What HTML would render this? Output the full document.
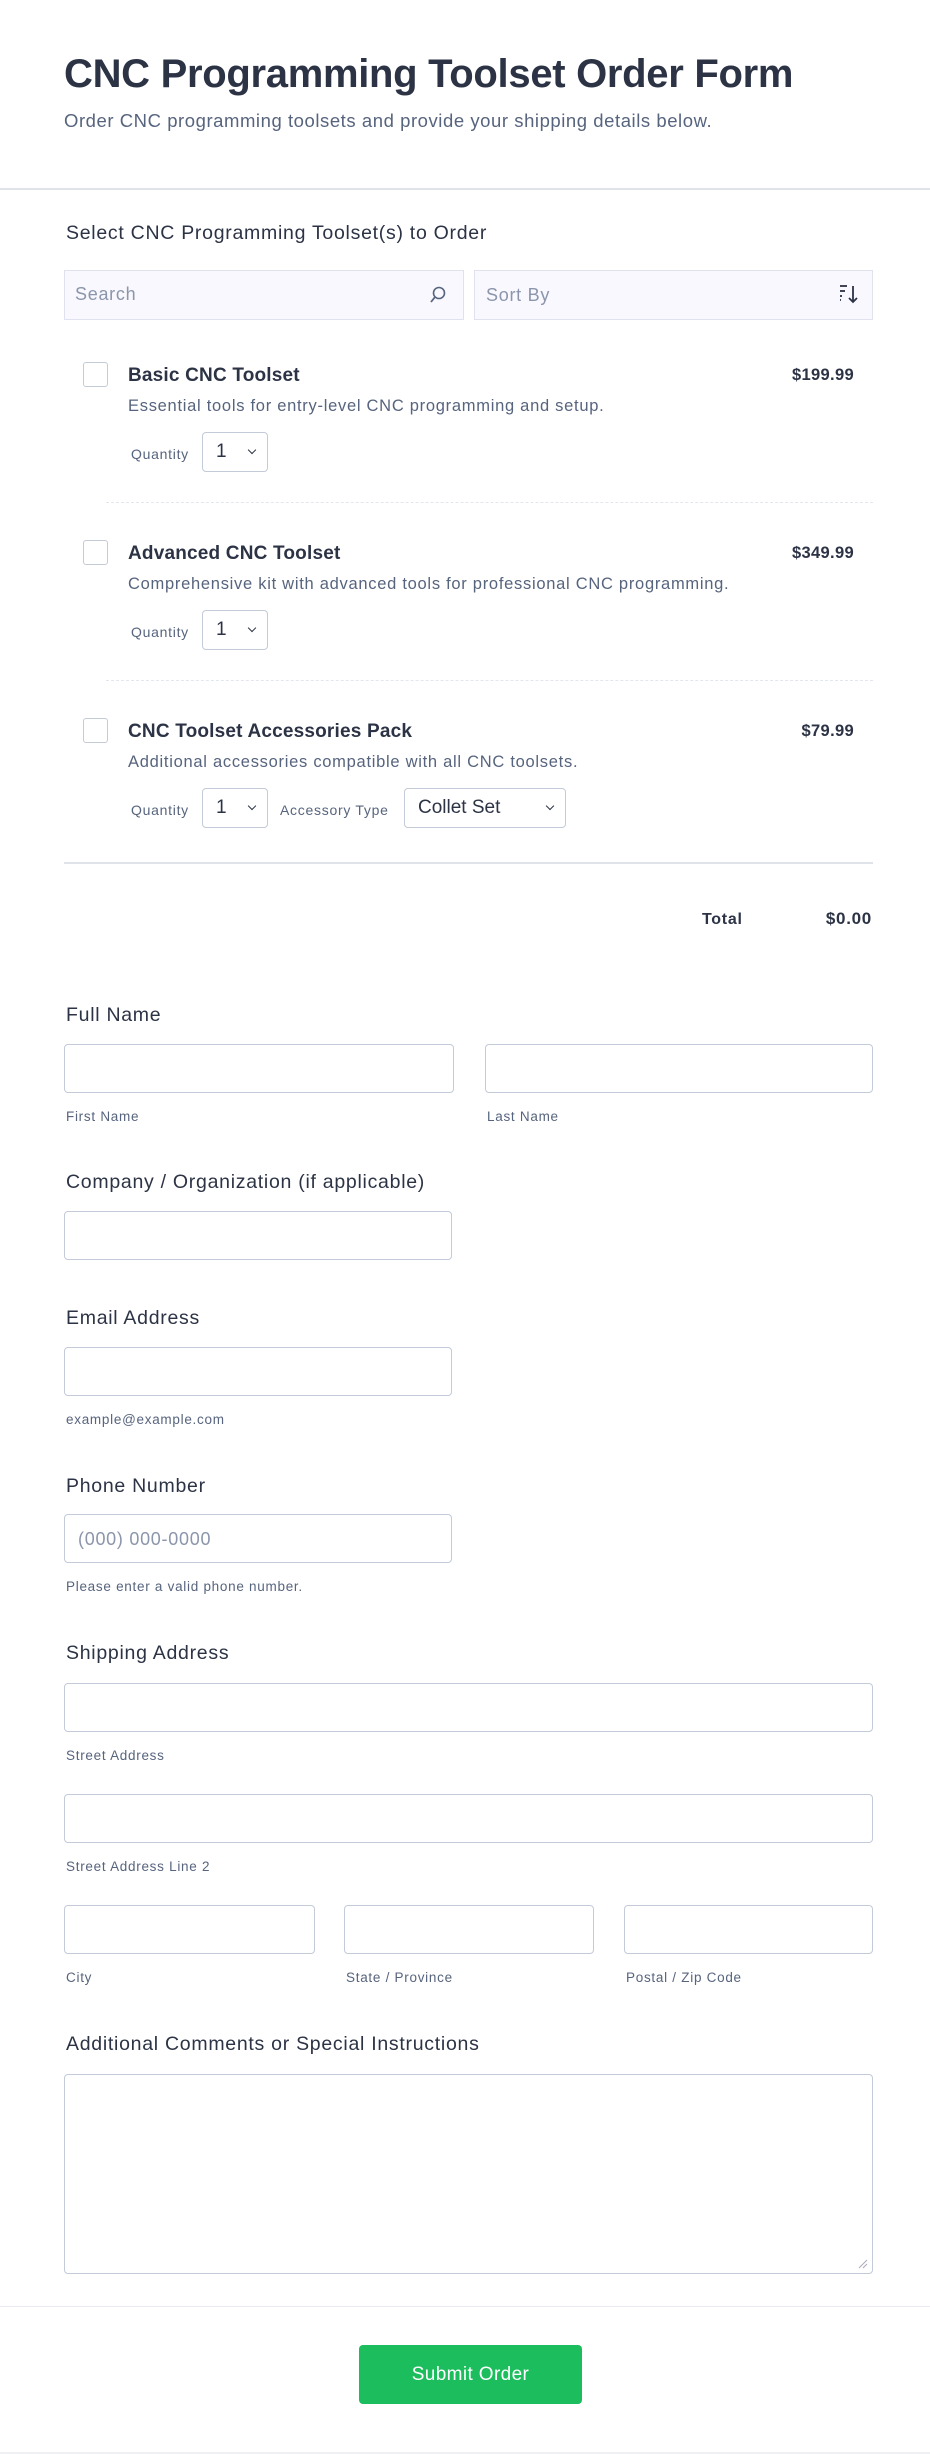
<!DOCTYPE html>
<html><head><meta charset="utf-8"><style>
*{box-sizing:border-box;margin:0;padding:0}
body{width:930px;height:2454px;background:#fff;font-family:"Liberation Sans",sans-serif;color:#2c3345;position:relative;overflow:hidden;letter-spacing:0.045em}
.a{position:absolute;white-space:nowrap}
.inp{position:absolute;border:1px solid #c3cad8;border-radius:4px;background:#fff;height:49px}
.lbl{font-size:19.5px;color:#2c3345}
.sub{font-size:13.5px;color:#57647e}
.cb{position:absolute;width:25px;height:25px;border:1px solid #c3cad8;border-radius:3px;background:#fff}
.sel{position:absolute;border:1px solid #c3cad8;border-radius:4px;height:40px;background:#fff;font-size:19px;color:#2c3345;padding:8px 0 0 13px;letter-spacing:0}
.sel:after{content:"";position:absolute;right:12px;top:14px;width:5px;height:5px;border-right:1.5px solid #2c3345;border-bottom:1.5px solid #2c3345;transform:rotate(45deg)}
.t{font-size:19px;font-weight:bold;letter-spacing:0.01em}
.d{font-size:16.5px;color:#57647e}
.p{font-size:16.5px;font-weight:bold;text-align:right;letter-spacing:0.02em}
.q{font-size:14px;color:#57647e}
</style></head><body>
<div class="a" style="left:64px;top:52px;font-size:40px;font-weight:bold;letter-spacing:-0.3px">CNC Programming Toolset Order Form</div>
<div class="a" style="left:64px;top:110px;font-size:18.5px;color:#57647e;letter-spacing:0.03em">Order CNC programming toolsets and provide your shipping details below.</div>
<div class="a" style="left:0;top:188px;width:930px;height:2px;background:#e1e3ea"></div>

<div class="a lbl" style="left:66px;top:222px">Select CNC Programming Toolset(s) to Order</div>
<div class="a" style="left:64px;top:270px;width:400px;height:50px;background:#f8f8fe;border:1px solid #e0e3ef"></div>
<div class="a" style="left:75px;top:284px;font-size:18px;color:#8b95ab">Search</div>
<svg class="a" style="left:429px;top:285px" width="18" height="20" viewBox="0 0 18 20"><circle cx="10" cy="8" r="5.5" fill="none" stroke="#57647e" stroke-width="1.6"/><line x1="6" y1="12" x2="2" y2="17" stroke="#57647e" stroke-width="1.8"/></svg>
<div class="a" style="left:474px;top:270px;width:399px;height:50px;background:#f8f8fe;border:1px solid #e0e3ef"></div>
<div class="a" style="left:486px;top:285px;font-size:18px;color:#8b95ab">Sort By</div>
<svg class="a" style="left:838px;top:283px" width="22" height="22" viewBox="0 0 22 22"><g stroke="#2c3345" stroke-width="1.8"><line x1="2" y1="3" x2="9" y2="3"/><line x1="2" y1="8" x2="7" y2="8"/><line x1="2" y1="13" x2="4" y2="13"/><line x1="2" y1="17" x2="3" y2="17"/><line x1="15" y1="3" x2="15" y2="19"/><polyline points="11,15 15,19 19,15" fill="none"/></g></svg>

<div class="cb" style="left:83px;top:362px"></div>
<div class="a t" style="left:128px;top:365px">Basic CNC Toolset</div>
<div class="a p" style="right:76px;top:366px">$199.99</div>
<div class="a d" style="left:128px;top:397px">Essential tools for entry-level CNC programming and setup.</div>
<div class="a q" style="left:131px;top:446px">Quantity</div>
<div class="sel" style="left:202px;top:432px;width:66px">1</div>
<div class="a" style="left:106px;top:502px;width:767px;border-top:1px dashed #e3e6ee"></div>

<div class="cb" style="left:83px;top:540px"></div>
<div class="a t" style="left:128px;top:543px">Advanced CNC Toolset</div>
<div class="a p" style="right:76px;top:544px">$349.99</div>
<div class="a d" style="left:128px;top:575px">Comprehensive kit with advanced tools for professional CNC programming.</div>
<div class="a q" style="left:131px;top:624px">Quantity</div>
<div class="sel" style="left:202px;top:610px;width:66px">1</div>
<div class="a" style="left:106px;top:680px;width:767px;border-top:1px dashed #e3e6ee"></div>

<div class="cb" style="left:83px;top:718px"></div>
<div class="a t" style="left:128px;top:721px">CNC Toolset Accessories Pack</div>
<div class="a p" style="right:76px;top:722px">$79.99</div>
<div class="a d" style="left:128px;top:753px">Additional accessories compatible with all CNC toolsets.</div>
<div class="a q" style="left:131px;top:802px">Quantity</div>
<div class="sel" style="left:202px;top:788px;width:66px">1</div>
<div class="a q" style="left:280px;top:802px">Accessory Type</div>
<div class="sel" style="left:404px;top:788px;width:162px;padding-left:13px">Collet Set</div>
<div class="a" style="left:64px;top:862px;width:809px;height:2px;background:#e1e3ea"></div>

<div class="a" style="left:702px;top:911px;font-size:16px;font-weight:bold">Total</div>
<div class="a" style="right:58px;top:909px;font-size:17px;font-weight:bold">$0.00</div>

<div class="a lbl" style="left:66px;top:1004px">Full Name</div>
<div class="inp" style="left:64px;top:1044px;width:390px"></div>
<div class="inp" style="left:485px;top:1044px;width:388px"></div>
<div class="a sub" style="left:66px;top:1109px">First Name</div>
<div class="a sub" style="left:487px;top:1109px">Last Name</div>

<div class="a lbl" style="left:66px;top:1171px">Company / Organization (if applicable)</div>
<div class="inp" style="left:64px;top:1211px;width:388px"></div>

<div class="a lbl" style="left:66px;top:1307px">Email Address</div>
<div class="inp" style="left:64px;top:1347px;width:388px"></div>
<div class="a sub" style="left:66px;top:1412px">example@example.com</div>

<div class="a lbl" style="left:66px;top:1475px">Phone Number</div>
<div class="inp" style="left:64px;top:1514px;width:388px"></div>
<div class="a" style="left:78px;top:1529px;font-size:18px;color:#8b95ab">(000) 000-0000</div>
<div class="a sub" style="left:66px;top:1579px">Please enter a valid phone number.</div>

<div class="a lbl" style="left:66px;top:1642px">Shipping Address</div>
<div class="inp" style="left:64px;top:1683px;width:809px"></div>
<div class="a sub" style="left:66px;top:1748px">Street Address</div>
<div class="inp" style="left:64px;top:1794px;width:809px"></div>
<div class="a sub" style="left:66px;top:1859px">Street Address Line 2</div>
<div class="inp" style="left:64px;top:1905px;width:251px"></div>
<div class="inp" style="left:344px;top:1905px;width:250px"></div>
<div class="inp" style="left:624px;top:1905px;width:249px"></div>
<div class="a sub" style="left:66px;top:1970px">City</div>
<div class="a sub" style="left:346px;top:1970px">State / Province</div>
<div class="a sub" style="left:626px;top:1970px">Postal / Zip Code</div>

<div class="a lbl" style="left:66px;top:2033px">Additional Comments or Special Instructions</div>
<div class="inp" style="left:64px;top:2074px;width:809px;height:200px"></div>
<svg class="a" style="left:858px;top:2259px" width="10" height="10"><path d="M1 9L9 1M5 9L9 5" stroke="#aab" stroke-width="1"/></svg>

<div class="a" style="left:0;top:2306px;width:930px;height:1px;background:#e8eaf0"></div>
<div class="a" style="left:359px;top:2345px;width:223px;height:59px;background:#1bbd5c;border-radius:4px;color:#fff;font-size:19px;text-align:center;line-height:59px;letter-spacing:0.02em">Submit Order</div>
<div class="a" style="left:0;top:2452px;width:930px;height:2px;background:#eef0f4"></div>
</body></html>
